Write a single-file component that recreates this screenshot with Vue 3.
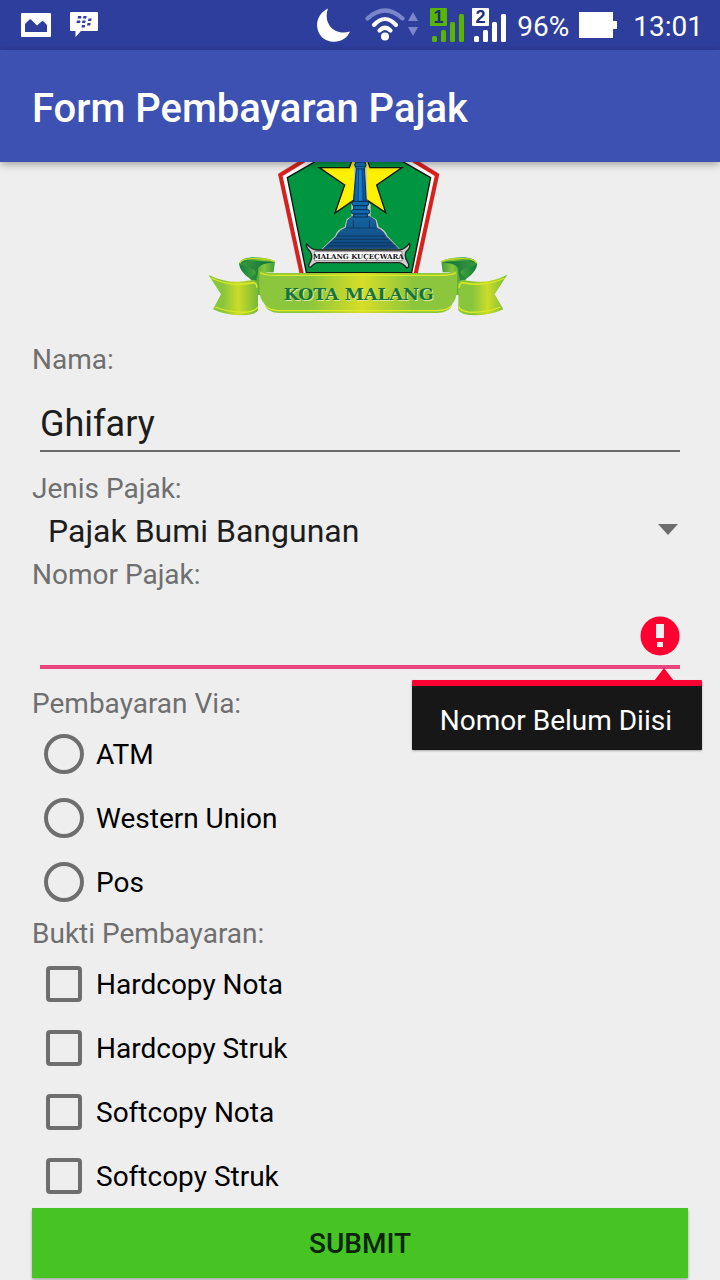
<script setup>
import { ref } from 'vue'

const name = ref('Ghifary')
const taxType = ref('Pajak Bumi Bangunan')
const taxTypes = ['Pajak Bumi Bangunan']
const taxNumber = ref('')
const via = ref('')
const viaOptions = ['ATM', 'Western Union', 'Pos']
const proofs = ref([])
const proofOptions = ['Hardcopy Nota', 'Hardcopy Struk', 'Softcopy Nota', 'Softcopy Struk']
</script>

<template>
  <div class="screen">
    <div class="status">
      <svg width="30" height="24" viewBox="0 0 30 24" aria-hidden="true">
        <path fill="#fff" fill-rule="evenodd" d="M1 0H29Q30 0 30 1V23Q30 24 29 24H1Q0 24 0 23V1Q0 0 1 0ZM4 19H26V12L22 8Q21 8 20 9L16 12.500L10 6.500Q9 6 8 7L4 11Z" />
      </svg>
      <svg class="bbm" width="28" height="26" viewBox="0 0 28 26" aria-hidden="true">
        <path fill="#fff" d="M1 0H27Q28 0 28 1V18Q28 19 27 19H11L5.500 25V19H1Q0 19 0 18V1Q0 0 1 0Z" />
        <g fill="#303f9f">
          <path d="M8 4H11Q12 5 11 6.500H7.500ZM13.500 4H16.500Q17 5 16 6.500H13ZM7 8.500H10Q11 9.500 10 11H6.500ZM12.500 8.500H15.500Q16 9.500 15 11H12ZM18.500 6.500H21.500Q22 7.500 21 9H18ZM17.500 11H20.500Q21 12 20 13.500H17ZM12 13H15Q15.500 14 14.500 15.500H11.500Z" />
        </g>
      </svg>
      <span class="spacer"></span>
      <svg class="moon" width="34" height="34" viewBox="0 0 34 34" aria-hidden="true">
        <path fill="#fff" d="M11 0.500C-3 7 -3 25 8 31.500C18 36.500 29 33 33 23.500C25 26 17 24 12.500 17.500C9 12 9 6 11 0.500Z" />
      </svg>
      <svg class="wifi" width="54" height="34" viewBox="0 0 54 34" aria-hidden="true">
        <g fill="none" stroke-width="4.200" stroke-linecap="round">
          <path stroke="#7986cb" d="M2.500 10.500Q20 -5.500 37.500 10.500" />
          <path stroke="#fff" d="M9 17Q20 5 31 17M14.500 22.500Q20 17 25.500 22.500" />
        </g>
        <circle cx="20" cy="28.500" r="4" fill="#fff" />
        <path fill="#7986cb" d="M43 13L48 4L53 13ZM43 19H53L48 28Z" />
      </svg>
      <svg class="sim" width="35" height="35" viewBox="0 0 35 35" aria-hidden="true">
        <g fill="#58b500">
          <rect width="17" height="18" rx="1" /><rect x="2" y="28" width="5" height="6" rx="1.500" />
          <rect x="11" y="22" width="5" height="12" rx="1.500" /><rect x="20" y="14" width="5" height="20" rx="1.500" />
          <rect x="29" y="6" width="5" height="28" rx="1.500" />
        </g>
        <text class="sim-no" x="8.500" y="15" text-anchor="middle" fill="#20307c">1</text>
      </svg>
      <svg class="sim2" width="35" height="35" viewBox="0 0 35 35" aria-hidden="true">
        <g fill="#fff">
          <rect width="17" height="18" rx="1" /><rect x="2" y="28" width="5" height="6" rx="1.500" />
          <rect x="11" y="22" width="5" height="12" rx="1.500" /><rect x="20" y="14" width="5" height="20" rx="1.500" />
          <rect x="29" y="6" width="5" height="28" rx="1.500" />
        </g>
        <text class="sim-no" x="8.500" y="15" text-anchor="middle" fill="#20307c">2</text>
      </svg>
      <span class="percent">96%</span>
      <svg width="38" height="26" viewBox="0 0 38 26" aria-hidden="true">
        <path fill="#fff" d="M0 0H34V9H38V17H34V26H0Z" />
      </svg>
      <span class="clock">13:01</span>
    </div>

    <header class="appbar"><h1>Form Pembayaran Pajak</h1></header>

    <main>
      <div class="logo">
        <svg width="308" height="158" viewBox="18 21 924 474" role="img" aria-label="Kota Malang">
          <defs>
            <linearGradient id="band"><stop offset="0" stop-color="#8cc63c" /><stop offset=".25" stop-color="#8cc63c" /><stop offset=".52" stop-color="#d6dd27" /><stop offset=".78" stop-color="#8cc63c" /><stop offset="1" stop-color="#8cc63c" /></linearGradient>
            <linearGradient id="tail"><stop offset="0" stop-color="#8ac63b" /><stop offset=".3" stop-color="#8ac63b" /><stop offset=".6" stop-color="#ccdc29" /><stop offset="1" stop-color="#76ba38" /></linearGradient>
            <linearGradient id="fold"><stop offset="0" stop-color="#0e7f3c" /><stop offset=".4" stop-color="#3f9e3c" /><stop offset=".7" stop-color="#86c63c" /><stop offset="1" stop-color="#3f9c3c" /></linearGradient>
            <linearGradient id="inner"><stop offset="0" stop-color="#3a9a3d" /><stop offset="1" stop-color="#0a7038" /></linearGradient>
            <linearGradient id="shaft"><stop offset="0" stop-color="#0b4d8f" /><stop offset=".5" stop-color="#1484d6" /><stop offset="1" stop-color="#0a4680" /></linearGradient>
            <linearGradient id="base" x2="0" y2="1"><stop offset="0" stop-color="#14649f" /><stop offset="1" stop-color="#124880" /></linearGradient>
          </defs>
          <path fill="#fff" stroke="#c9c9c9" stroke-width="3" d="M477 -92L717 56L652 360H300L235 56Z" />
          <path fill="none" stroke="#d9201c" stroke-width="12" d="M477 -84L711 60L646 360H306L241 60Z" />
          <path fill="#009540" stroke="#111" stroke-width="4" d="M477 -56L692 68L635 353H319L262 68Z" />
          <path fill="#fff100" stroke="#151515" stroke-width="4" d="M358 38H448L480 -50L510 38H606L530 90L557 173L481 122L405 174L434 90Z" />
          <path fill="#bcc9bd" d="M462 15H500L502 140L512 148V184L530 194L536 216Q556 224 562 242L600 283H364L406 242Q410 224 434 216L440 192L454 184V146L463 138Z" />
          <path fill="url(#base)" stroke="#103a66" stroke-width="2" d="M457 184H508L526 196L530 219Q550 226 557 243L595 281H370L410 244Q416 226 438 219L443 196Z" />
          <path fill="url(#shaft)" stroke="#0b2d52" stroke-width="3" d="M469 40H493L499 140H460Z" />
          <path fill="#1874b8" stroke="#0b2d52" stroke-width="3" d="M468 21H495L498 30L492 42H470L464 30Z" />
          <path fill="none" stroke="#0b2d52" stroke-width="2" d="M476 45L474 140M487 45L490 140M466 34H496M460 195V218M508 195V218M438 219H530M410 243H557M401 253H566M390 263H577M381 272H587" />
          <g fill="#1268ac" stroke="#0b2d52" stroke-width="3">
            <rect x="456" y="139" width="50" height="13" rx="6" /><rect x="461" y="152" width="40" height="12" />
            <rect x="454" y="164" width="55" height="13" rx="6" /><rect x="461" y="177" width="41" height="9" />
          </g>
          <path fill="#d0d0d0" stroke="#242424" stroke-width="4" stroke-linejoin="round" d="M320 266Q333 284 351 285H600Q616 282 628 265Q634 276 618 290Q612 304 622 320Q632 336 620 339Q611 326 598 323H350Q340 327 331 337Q321 336 331 320Q340 303 330 289Q317 276 320 266Z" />
          <path fill="#fff" stroke="#666" stroke-width="2" d="M344 290H606V317H344Z" />
          <text class="motto" x="475" y="311" text-anchor="middle">MALANG KUÇEÇWARA</text>

          <g id="curl">
            <path fill="url(#fold)" d="M117 326Q120 350 148 370Q168 385 172 420H198V352H221L225 319Q200 306 155 307Q122 310 117 326Z" />
            <path fill="url(#inner)" d="M120 327Q145 312 224 322Q178 326 174 342Q176 356 165 384Q158 375 148 368Q184 352 152 340Q126 332 120 327Z" />
            <path fill="none" stroke="#c5dc27" stroke-width="4" d="M119 325Q126 311 158 311Q205 310 224 320" />
          </g>
          <use href="#curl" transform="translate(949 0) scale(-1 1)" />
          <path fill="url(#tail)" d="M25 359Q86 390 153 376Q175 371 174 394V466Q166 482 119 481Q73 480 39 463L63 418Z" />
          <path fill="url(#tail)" d="M922 359Q862 390 795 376Q774 371 775 394V466Q783 482 830 481Q875 480 910 463L884 418Z" />
          <path fill="none" stroke="#ddeb22" stroke-width="4" d="M34 369Q91 396 154 384Q170 380 171 398M46 456Q94 475 144 471Q169 467 173 456M914 369Q857 396 794 384Q778 380 777 398M902 456Q855 475 805 471Q780 467 777 456" />
          <path fill="url(#band)" d="M178 345Q186 355 230 354H722Q764 355 771 345V400Q771 432 756 448Q752 472 713 474H236Q199 472 194 448Q178 432 178 400Z" />
          <path fill="none" stroke="#dfea26" stroke-width="4" d="M181 353Q192 361 237 361H714Q758 361 768 353M196 452Q204 466 239 467H713Q746 466 754 452" />
          <text class="city shadow" x="479" y="438" text-anchor="middle">KOTA MALANG</text>
          <text class="city" x="476" y="435" text-anchor="middle">KOTA MALANG</text>
        </svg>
      </div>

      <form novalidate @submit.prevent>
        <label class="caption" for="name">Nama:</label>
        <div class="field"><input id="name" v-model="name" class="line" type="text"></div>

        <label class="caption" for="type">Jenis Pajak:</label>
        <div class="spinner">
          <select id="type" v-model="taxType">
            <option v-for="t in taxTypes" :key="t">{{ t }}</option>
          </select>
          <svg width="20" height="11" viewBox="0 0 20 11" aria-hidden="true"><path fill="#6d6d6d" d="M0 0H20L10 11Z" /></svg>
        </div>

        <label class="caption" for="number">Nomor Pajak:</label>
        <div class="field">
          <input id="number" v-model="taxNumber" class="line invalid" type="text" aria-invalid="true" aria-describedby="number-error">
          <svg class="mark" width="40" height="40" viewBox="0 0 40 40" aria-hidden="true">
            <circle cx="20" cy="20" r="19.500" fill="#ff0030" />
            <path fill="#eee" d="M16 8H24V22H16ZM17 26H23V31H17Z" />
          </svg>
          <div id="number-error" class="error" role="alert">
            <svg width="20" height="13" viewBox="0 0 20 13" aria-hidden="true"><path fill="#ff0030" d="M0 13L10 0L20 13Z" /></svg>
            Nomor Belum Diisi
          </div>
        </div>

        <fieldset>
          <legend class="caption">Pembayaran Via:</legend>
          <label v-for="o in viaOptions" :key="o" class="choice">
            <input v-model="via" type="radio" name="via" :value="o">{{ o }}
          </label>
        </fieldset>

        <fieldset>
          <legend class="caption">Bukti Pembayaran:</legend>
          <label v-for="o in proofOptions" :key="o" class="choice">
            <input v-model="proofs" type="checkbox" :value="o">{{ o }}
          </label>
        </fieldset>

        <button type="submit">SUBMIT</button>
      </form>
    </main>
  </div>
</template>

<style>
html,
body {
  background: #eee;
}
</style>

<style scoped>
.screen {
  min-height: 100vh;
  background: #eee;
  color: #000;
  font-family: Roboto, "Noto Sans", sans-serif;
  font-size: 28px;
}
.screen * {
  box-sizing: border-box;
}
svg {
  display: block;
  flex: none;
}
.status {
  display: flex;
  align-items: center;
  height: 50px;
  padding: 0 17px 0 21px;
  background: #2e3e9c;
  color: #fff;
}
.bbm {
  margin-left: 19px;
}
.spacer {
  flex: 1;
}
.wifi {
  margin-left: 14px;
}
.sim {
  margin-left: 11px;
}
.sim2 {
  margin-left: 7px;
}
.sim-no {
  font: bold 18px "Liberation Sans", sans-serif;
}
.percent {
  margin: 2px 10px 0;
}
.clock {
  margin: 2px 0 0 16px;
}
.appbar {
  position: relative;
  z-index: 1;
  display: flex;
  align-items: center;
  height: 112px;
  padding: 4px 32px 0;
  background: #3d51b3;
  box-shadow: 0 2px 8px rgba(0, 0, 0, 0.35);
  color: #fff;
}
h1 {
  margin: 0;
  font-size: 40px;
  font-weight: 500;
}
main {
  padding: 0 32px 3px;
}
.logo {
  display: flex;
  justify-content: center;
  padding-bottom: 20px;
}
.motto {
  font: bold 21px "DejaVu Serif", serif;
  fill: #151515;
}
.city {
  font: bold 52px "DejaVu Serif", serif;
  fill: #17733b;
}
.city.shadow {
  fill: #dceaa0;
}
.caption {
  display: block;
  height: 38px;
  padding: 0;
  color: #6f6f6f;
  line-height: 40px;
}
.field {
  position: relative;
  height: 91px;
  padding: 0 8px;
}
.line {
  display: block;
  width: 100%;
  height: 74px;
  padding: 20px 0 0;
  border: 0;
  border-bottom: 2px solid #6a6a6a;
  border-radius: 0;
  outline: 0;
  background: transparent;
  color: #1d1d1d;
  font: inherit;
  font-size: 36px;
}
.line.invalid {
  height: 76px;
  padding-right: 48px;
  border-bottom: 4px solid #e9457f;
}
.mark {
  position: absolute;
  top: 23px;
  right: 8px;
}
.error {
  position: absolute;
  z-index: 1;
  top: 87px;
  right: -14px;
  height: 70px;
  padding: 0 30px 0 28px;
  border-top: 6px solid #ff0030;
  border-radius: 1px;
  background: #171717;
  box-shadow: 0 1px 2px rgba(0, 0, 0, 0.3);
  color: #fff;
  line-height: 70px;
  white-space: nowrap;
}
.error svg {
  position: absolute;
  top: -18px;
  right: 28px;
}
.spinner {
  position: relative;
  height: 48px;
}
select {
  display: block;
  width: 100%;
  height: 48px;
  padding: 0 48px 0 16px;
  border: 0;
  outline: 0;
  appearance: none;
  background: transparent;
  color: #1d1d1d;
  font: inherit;
  font-size: 32px;
}
.spinner svg {
  position: absolute;
  top: 17px;
  right: 10px;
  pointer-events: none;
}
fieldset {
  min-width: 0;
  margin: 0;
  padding: 0;
  border: 0;
}
.choice {
  display: flex;
  align-items: center;
  gap: 12px;
  height: 64px;
  padding-left: 12px;
}
.choice input {
  width: 40px;
  height: 40px;
  margin: 0;
  border: 4px solid #6e6e6e;
  border-radius: 50%;
  appearance: none;
}
.choice input[type="checkbox"] {
  width: 36px;
  height: 36px;
  margin: 0 2px;
  border-radius: 4px;
}
.choice input:checked {
  background: #e9457f;
}
button {
  display: block;
  width: 100%;
  height: 70px;
  padding: 0;
  border: 0;
  background: #45c423;
  box-shadow: 0 2px 3px rgba(0, 0, 0, 0.3);
  color: #0c230a;
  font: inherit;
  font-weight: 500;
}
</style>
